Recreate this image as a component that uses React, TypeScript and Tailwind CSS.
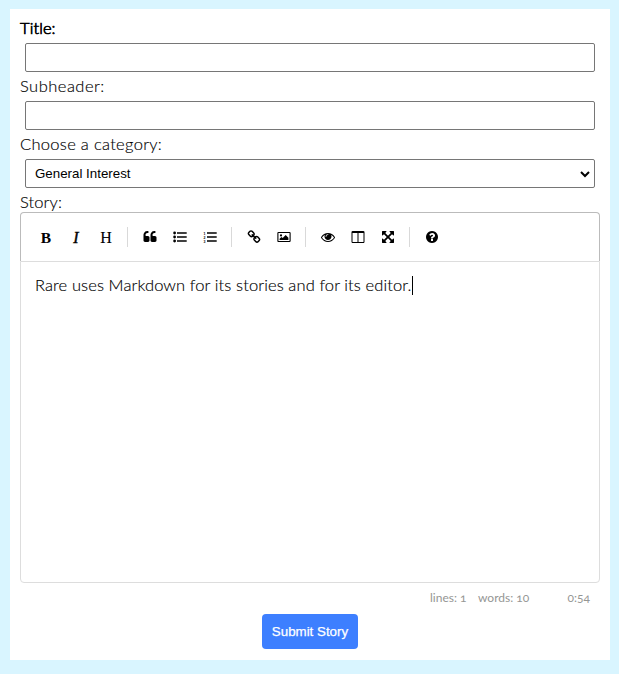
import React from "react";

const PATHS = {
  quote:
    "M832 960v384q0 80-56 136t-136 56h-384q-80 0-136-56t-56-136v-704q0-104 40.5-198.5t109.5-163.5 163.5-109.5 198.5-40.5h64q26 0 45 19t19 45v128q0 26-19 45t-45 19h-64q-106 0-181 75t-75 181v32q0 40 28 68t68 28h224q80 0 136 56t56 136zm896 0v384q0 80-56 136t-136 56h-384q-80 0-136-56t-56-136v-704q0-104 40.5-198.5t109.5-163.5 163.5-109.5 198.5-40.5h64q26 0 45 19t19 45v128q0 26-19 45t-45 19h-64q-106 0-181 75t-75 181v32q0 40 28 68t68 28h224q80 0 136 56t56 136z",
  link: "M1520 1216q0-40-28-68l-208-208q-28-28-68-28-42 0-72 32 3 3 19 18.5t21.5 21.5 15 19 13 25.5 3.5 27.5q0 40-28 68t-68 28q-15 0-27.5-3.5t-25.5-13-19-15-21.5-21.5-18.5-19q-33 31-33 73 0 40 28 68l206 207q27 27 68 27 40 0 68-26l147-146q28-28 28-67zm-703-705q0-40-28-68l-206-207q-28-28-68-28-39 0-68 27l-147 146q-28 28-28 67 0 40 28 68l208 208q27 27 68 27 42 0 72-31-3-3-19-18.5t-21.5-21.5-15-19-13-25.5-3.5-27.5q0-40 28-68t68-28q15 0 27.5 3.5t25.5 13 19 15 21.5 21.5 18.5 19q33-31 33-73zm895 705q0 120-85 203l-147 146q-83 83-203 83-121 0-204-85l-206-207q-83-83-83-203 0-123 88-209l-88-88q-86 88-208 88-120 0-204-84l-208-208q-84-84-84-204t85-203l147-146q83-83 203-83 121 0 204 85l206 207q83 83 83 203 0 123-88 209l88 88q86-88 208-88 120 0 204 84l208 208q84 84 84 204z",
  eye: "M1664 960q-152-236-381-353 61 104 61 225 0 185-131.5 316.5t-316.5 131.5-316.5-131.5-131.5-316.5q0-121 61-225-229 117-381 353 133 205 333.5 326.5t434.5 121.5 434.5-121.5 333.5-326.5zm-720-384q0-20-14-34t-34-14q-125 0-214.5 89.5t-89.5 214.5q0 20 14 34t34 14 34-14 14-34q0-86 61-147t147-61q20 0 34-14t14-34zm848 384q0 34-20 69-140 230-376.5 368.5t-499.5 138.5-499.5-139-376.5-368q-20-35-20-69t20-69q140-229 376.5-368t499.5-139 499.5 139 376.5 368q20 35 20 69z",
  columns:
    "M224 1536h608v-1152h-640v1120q0 13 9.5 22.5t22.5 9.5zm1376-32v-1120h-640v1152h608q13 0 22.5-9.5t9.5-22.5zm128-1216v1216q0 66-47 113t-113 47h-1344q-66 0-113-47t-47-113v-1216q0-66 47-113t113-47h1344q66 0 113 47t47 113z",
  arrows:
    "M1411 541l-355 355 355 355 144-144q29-31 70-14 39 17 39 59v448q0 26-19 45t-45 19h-448q-42 0-59-40-17-39 14-69l144-144-355-355-355 355 144 144q31 30 14 69-17 40-59 40h-448q-26 0-45-19t-19-45v-448q0-42 40-59 39-17 69 14l144 144 355-355-355-355-144 144q-19 19-45 19-12 0-24-5-40-17-40-59v-448q0-26 19-45t45-19h448q42 0 59 40 17 39-14 69l-144 144 355 355 355-355-144-144q-31-30-14-69 17-40 59-40h448q26 0 45 19t19 45v448q0 42-39 59-13 5-25 5-26 0-45-19z",
  help: "M1024 1376v-192q0-14-9-23t-23-9h-192q-14 0-23 9t-9 23v192q0 14 9 23t23 9h192q14 0 23-9t9-23zm256-672q0-88-55.5-163t-138.5-116-170-41q-243 0-371 213-15 24 8 42l132 100q7 6 19 6 16 0 25-12 53-68 86-92 34-24 86-24 48 0 85.5 26t37.5 59q0 38-20 61t-68 45q-63 28-115.5 86.5t-52.5 125.5v36q0 14 9 23t23 9h192q14 0 23-9t9-23q0-19 21.5-49.5t54.5-49.5q32-18 49-28.5t46-35 44.5-48 28-60.5 12.5-81zm384 192q0 209-103 385.5t-279.5 279.5-385.5 103-385.5-103-279.5-279.5-103-385.5 103-385.5 279.5-279.5 385.5-103 385.5 103 279.5 279.5 103 385.5z",
};

function Glyph({ name }: { name: keyof typeof PATHS }) {
  return (
    <svg className="h-3.5 w-3.5 overflow-visible" viewBox="0 0 1792 1792" fill="currentColor">
      <path d={PATHS[name]} />
    </svg>
  );
}

function ImageIcon() {
  return (
    <svg className="h-3.5 w-3.5" viewBox="0 0 14 14">
      <rect x="0.9" y="2.5" width="12.2" height="9" rx="0.6" fill="none" stroke="currentColor" strokeWidth="1.1" />
      <circle cx="4" cy="5.4" r="1.1" fill="currentColor" />
      <path d="M2.6 10V8.7l1.8-1.7 1.3 1.1L8.7 5.1 11.4 7.7V10z" fill="currentColor" />
    </svg>
  );
}

function ListIcon({ ordered = false }: { ordered?: boolean }) {
  return (
    <svg className="h-3.5 w-3.5 overflow-visible" viewBox="0 0 14 14" fill="currentColor">
      {[3, 7, 11].map((y, i) => (
        <g key={y}>
          <rect x="4" y={y - 0.85} width="9.7" height="1.7" rx="0.2" />
          {ordered ? (
            <text x="0.4" y={y + 1.5} fontSize="3.5" fontWeight="700" fontFamily="Liberation Sans, sans-serif">
              {i + 1}
            </text>
          ) : (
            <circle cx="1.6" cy={y} r="1.4" />
          )}
        </g>
      ))}
    </svg>
  );
}

function Tool({ label, children }: { label: string; children: React.ReactNode }) {
  return (
    <button type="button" aria-label={label} className="flex h-[30px] w-[30px] items-center justify-center">
      {children}
    </button>
  );
}

function Separator() {
  return <i className="mr-[7.5px] ml-[5.5px] h-5 w-px bg-[#d9d9d9]" />;
}

const serif = "font-['Liberation_Serif',serif] leading-none";
const label = "block h-[19px] text-[16.5px] leading-[19px] [-webkit-text-stroke:0.15px_#000]";

export default function App() {
  return (
    <div className="h-[674px] w-[619px] bg-[#d9f5ff] pt-[9px] pl-[10px] font-['Lato',sans-serif] font-light text-black">
      <form className="flex h-[651px] w-[600px] flex-col bg-white p-[10px]">
        <label className="block h-[19px] text-[16.5px] leading-[19px] tracking-[0.1px] [-webkit-text-stroke:0.7px_#000]">Title:</label>
        <input className="m-[5px] h-[29px] rounded-[2px] border border-[#767676] px-2" />
        <label className={`${label} tracking-[0.48px]`}>Subheader:</label>
        <input className="m-[5px] h-[29px] rounded-[2px] border border-[#767676] px-2" />
        <label className={`${label} tracking-[0.3px]`}>Choose a category:</label>
        <div className="m-[5px] flex h-[29px] items-center justify-between rounded-[2px] border border-[#767676] pr-1 pl-[9px] font-['Liberation_Sans',sans-serif] text-[13.33px] font-normal">
          <span>General Interest</span>
          <svg className="h-[10px] w-[10px]" viewBox="0 0 10 10" fill="none" stroke="#000" strokeWidth="2">
            <path d="M1 3l4 4 4-4" />
          </svg>
        </div>
        <label className={`${label} tracking-[0.1px]`}>Story:</label>

        <div className="flex h-[49px] shrink-0 items-center rounded-t-[4px] border border-b-0 border-[#bbb] px-[10px]">
          <Tool label="Bold"><span className={`${serif} pt-px text-[15.5px] font-bold`}>B</span></Tool>
          <Tool label="Italic"><span className={`${serif} pt-px text-[16px] font-normal italic [-webkit-text-stroke:0.4px_#000]`}>I</span></Tool>
          <Tool label="Heading"><span className={`${serif} pt-px text-[16px] font-normal [-webkit-text-stroke:0.1px_#000]`}>H</span></Tool>
          <Separator />
          <Tool label="Quote"><Glyph name="quote" /></Tool>
          <Tool label="Generic list"><ListIcon /></Tool>
          <Tool label="Numbered list"><ListIcon ordered /></Tool>
          <Separator />
          <Tool label="Create link"><Glyph name="link" /></Tool>
          <Tool label="Insert image"><ImageIcon /></Tool>
          <Separator />
          <Tool label="Preview"><Glyph name="eye" /></Tool>
          <Tool label="Side by side"><Glyph name="columns" /></Tool>
          <Tool label="Fullscreen"><Glyph name="arrows" /></Tool>
          <Separator />
          <Tool label="Guide"><Glyph name="help" /></Tool>
        </div>
        <div className="flex h-[322px] shrink-0 items-start rounded-b-[4px] border border-[#ddd] px-[14px] py-[14px] text-[16.5px] leading-[19px] [-webkit-text-stroke:0.15px_#000]">
          <span className="whitespace-nowrap tracking-[0.11px]">Rare uses Markdown for its stories and for its editor.</span>
          <span className="h-[19px] w-px bg-black" />
        </div>
        <div className="flex h-[31px] shrink-0 justify-end pr-[10px] pt-[7px] text-xs leading-4 font-normal text-[#959694] oldstyle-nums">
          <span className="w-12 whitespace-nowrap">lines: 1</span>
          <span className="w-[52px] whitespace-nowrap">words: 10</span>
          <span className="w-[60px] text-right">0:54</span>
        </div>
        <button
          type="button"
          className="h-[35px] w-24 shrink-0 self-center rounded-[4px] bg-[#3d7fff] font-['Liberation_Sans',sans-serif] text-[13.33px] font-normal text-white [-webkit-text-stroke:0.25px_#fff]"
        >
          Submit Story
        </button>
      </form>
    </div>
  );
}
